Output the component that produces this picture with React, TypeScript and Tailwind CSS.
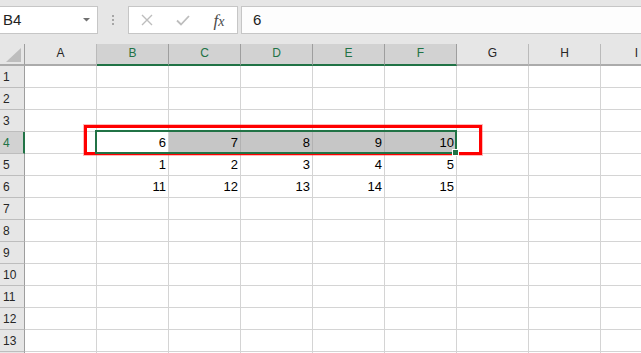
import React from 'react';

const COLS = ['A', 'B', 'C', 'D', 'E', 'F', 'G', 'H', 'I'];
const SELECTED_COLS = ['B', 'C', 'D', 'E', 'F'];

const DATA: Record<number, Record<string, number>> = {
  4: { B: 6, C: 7, D: 8, E: 9, F: 10 },
  5: { B: 1, C: 2, D: 3, E: 4, F: 5 },
  6: { B: 11, C: 12, D: 13, E: 14, F: 15 },
};

function FormulaBar() {
  return (
    <div className="h-[44px] bg-[#e6e6e6] flex items-start pt-[6px] shrink-0">
      <div className="w-[98px] h-[28px] bg-white border border-l-0 border-[#c6c6c6] flex items-center justify-between pl-[3px] pr-[6px] text-[15px] text-[#222]">
        <span>B4</span>
        <svg width="8" height="4" viewBox="0 0 8 4">
          <path d="M0 0 L7 0 L3.5 3.5 Z" fill="#707070" />
        </svg>
      </div>
      <div className="w-[30px] h-[28px] flex flex-col items-center justify-center gap-[2px]">
        <div className="w-[2px] h-[2px] bg-[#a6a6a6]" />
        <div className="w-[2px] h-[2px] bg-[#a6a6a6]" />
        <div className="w-[2px] h-[2px] bg-[#a6a6a6]" />
      </div>
      <div className="w-[110px] h-[28px] bg-white border border-[#c6c6c6] flex">
        <div className="w-[36px] flex items-center justify-center">
          <svg width="12" height="12" viewBox="0 0 12 12">
            <path d="M1 1 L11 11 M11 1 L1 11" stroke="#bdbdbd" strokeWidth="1.4" fill="none" />
          </svg>
        </div>
        <div className="w-[36px] flex items-center justify-center">
          <svg width="14" height="11" viewBox="0 0 14 11">
            <path d="M1 5.5 L5 9.5 L13 1" stroke="#bdbdbd" strokeWidth="1.8" fill="none" />
          </svg>
        </div>
        <div className="w-[36px] flex items-center justify-center font-['Liberation_Serif',serif] italic text-[#4a4a4a] leading-none">
          <span className="text-[17px]">f</span>
          <span className="text-[14px] mt-[3px]">x</span>
        </div>
      </div>
      <div className="flex-1 ml-[3px] -mr-[2px] h-[28px] bg-[#fdfdfd] border border-[#c6c6c6] flex items-center pl-[11px] text-[15px] text-[#222]">
        6
      </div>
    </div>
  );
}

function HeaderRow() {
  return (
    <div className="flex h-[22px] shrink-0 bg-[#e6e6e6]">
      <div className="w-[25px] shrink-0 border-r border-r-[#9e9e9e] border-b-2 border-b-[#ababab] flex items-end justify-end pr-[3px] pb-[2px]">
        <svg width="15" height="14" viewBox="0 0 15 14">
          <path d="M15 0 L15 14 L0 14 Z" fill="#bdbdbd" />
        </svg>
      </div>
      {COLS.map((c) => {
        const sel = SELECTED_COLS.includes(c);
        return (
          <div
            key={c}
            className={`w-[72px] shrink-0 border-r border-b-2 flex justify-center leading-[18px] text-[12px] ${
              sel
                ? 'bg-[#d2d2d2] border-r-[#9e9e9e] border-b-[#217346] text-[#217346]'
                : 'border-r-[#bababa] border-b-[#ababab] text-[#262626]'
            }`}
          >
            {c}
          </div>
        );
      })}
    </div>
  );
}

function Row({ n }: { n: number }) {
  const active = n === 4;
  return (
    <div className="flex h-[22px] shrink-0">
      <div
        className={`w-[25px] shrink-0 border-b border-b-[#bdbdbd] pl-[3px] text-[12px] leading-[22px] ${
          active
            ? 'bg-[#d2d2d2] border-r-2 border-r-[#217346] text-[#217346]'
            : 'bg-[#e6e6e6] border-r border-r-[#9e9e9e] text-[#262626]'
        }`}
      >
        {n <= 13 ? n : ''}
      </div>
      {COLS.map((c) => {
        const v = DATA[n]?.[c];
        const shaded = active && ['C', 'D', 'E', 'F'].includes(c);
        return (
          <div
            key={c}
            className={`w-[72px] shrink-0 border-r border-b flex items-center justify-end pr-[2px] text-[13px] leading-[21px] text-black ${
              shaded ? 'bg-[#c6c6c6] border-[#b2b2b2]' : 'bg-white border-[#d4d4d4]'
            }`}
          >
            {v}
          </div>
        );
      })}
    </div>
  );
}

export default function App() {
  const rows = Array.from({ length: 14 }, (_, i) => i + 1);
  return (
    <div className="relative w-[641px] h-[353px] overflow-hidden bg-white font-['Liberation_Sans',Arial,sans-serif] flex flex-col">
      <FormulaBar />
      <HeaderRow />
      {rows.map((n) => (
        <Row key={n} n={n} />
      ))}

      {/* red annotation box */}
      <div className="absolute left-[84px] top-[125px] w-[398px] h-[30px] border-[3px] border-[#ff0000] shadow-[0_0_0_1px_rgba(255,60,60,0.35)]" />
      {/* selection outline */}
      <div className="absolute left-[95px] top-[130px] w-[362px] h-[24px] border-2 border-[#217346]" />
      {/* fill handle */}
      <div className="absolute left-[452px] top-[149px] w-[7px] h-[7px] bg-[#217346] border border-white" />
    </div>
  );
}
